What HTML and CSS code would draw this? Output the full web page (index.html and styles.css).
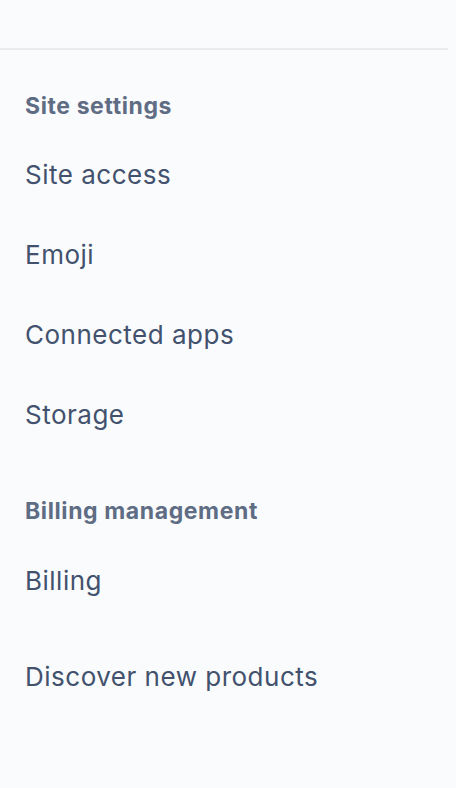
FILE: index.html
```html
<!DOCTYPE html>
<html lang="en">
<head>
    <meta charset="UTF-8">
    <meta name="viewport" content="width=device-width, initial-scale=1.0">
    <title>Settings</title>
    <link rel="stylesheet" href="styles.css">
</head>
<body>
    <div class="sidebar">
        <div class="topbar"></div>

        <!-- Site settings -->
        <div class="section">
            <h3>Site settings</h3>
            <a href="#">Site access</a>
            <a href="#">Emoji</a>
            <a href="#">Connected apps</a>
            <a href="#">Storage</a>
        </div>

        <!-- Billing -->
        <div class="section billing">
            <h3>Billing management</h3>
            <a href="#">Billing</a>
        </div>

        <div class="section extra">
            <a href="#">Discover new products</a>
        </div>
    </div>
</body>
</html>
```

FILE: styles.css
```css
body {
    font-family: Inter, "Noto Sans", sans-serif;
    background-color: #fafbfc;
    margin: 0;
    padding: 0;
}

.sidebar {
    width: 448px;
    min-height: 788px;
}

.topbar {
    height: 48px;
    border-bottom: 2px solid #e9ebee;
}

.section {
    padding-left: 25px;
}

.section h3 {
    margin: 43px 0 16px;
    font-size: 23px;
    line-height: 26px;
    font-weight: 700;
    letter-spacing: 0.6px;
    color: #5e6c84;
}

.section a {
    display: block;
    padding: 25px 0;
    font-size: 26px;
    line-height: 30px;
    letter-spacing: 0.5px;
    color: #42526e;
    text-decoration: none;
}

.billing h3 {
    margin-top: 43px;
    margin-bottom: 17px;
}

.extra {
    margin-top: 16px;
}
```
